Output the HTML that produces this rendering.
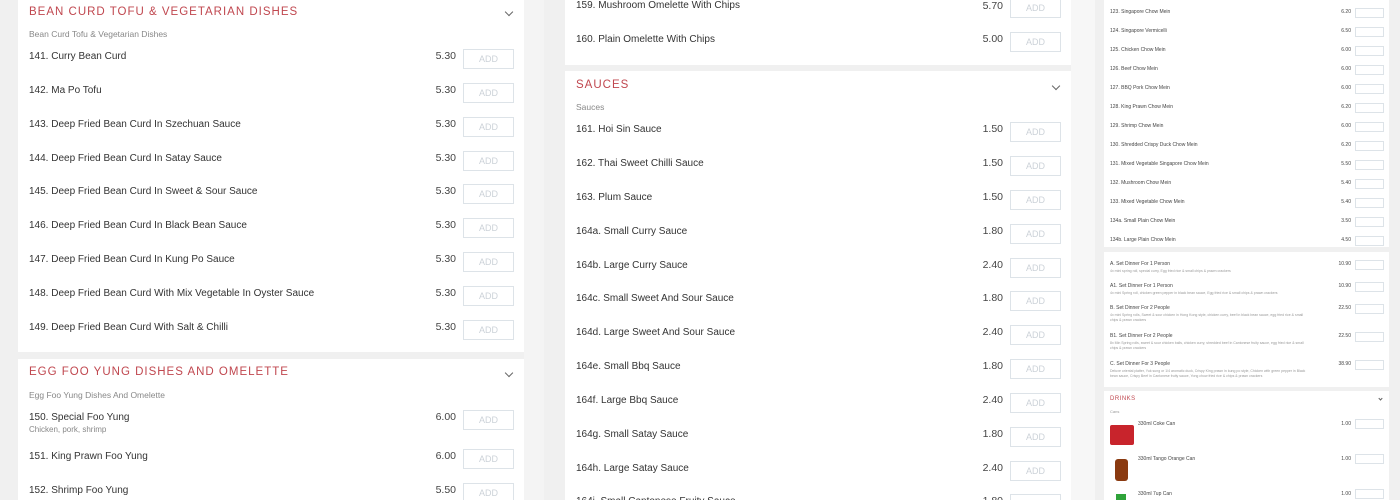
<!DOCTYPE html>
<html><head><meta charset="utf-8">
<style>
*{margin:0;padding:0;box-sizing:border-box}
html,body{width:1400px;height:500px;overflow:hidden}
body{background:#f0f0f0;font-family:"Liberation Sans",sans-serif;position:relative}
.card{position:absolute;background:#fff}
.a{position:absolute;white-space:nowrap}
.h{color:#c0474f;font-size:11.5px;letter-spacing:1px}
.s{color:#888;font-size:8.5px}
.n{color:#333;font-size:10px}
.p{color:#444;font-size:10.5px;text-align:right;width:50px}
.b{position:absolute;width:51px;height:20px;border:1px solid #dde3e8;color:#ccd2d8;font-size:9px;text-align:center;line-height:18px}
.chev{position:absolute;width:6px;height:6px;border-right:1px solid #666;border-bottom:1px solid #666;transform:rotate(45deg)}
.rn{color:#444;font-size:5px}
.rp{color:#444;font-size:5px;text-align:right;width:20px}
.rb{position:absolute;width:29px;height:10px;border:1px solid #dde3e8}
.rd{color:#999;font-size:3.5px}
</style></head><body>
<div style="position:absolute;left:1071px;top:0;width:24px;height:500px;background:#f7f7f7"></div>
<div style="position:absolute;left:524px;top:0;width:20px;height:500px;background:#f4f4f4"></div>

<!-- LEFT -->
<div class="card" style="left:18px;top:0;width:506px;height:352px"></div>
<div class="card" style="left:18px;top:359px;width:506px;height:141px"></div>
<div class="a h" style="left:29px;top:6px">BEAN CURD TOFU &amp; VEGETARIAN DISHES</div>
<div class="chev" style="left:506px;top:9px"></div>
<div class="a s" style="left:29px;top:29px">Bean Curd Tofu &amp; Vegetarian Dishes</div>

<div class="a n" style="left:29px;top:51px">141. Curry Bean Curd</div><div class="a p" style="left:406px;top:50px">5.30</div><div class="b" style="left:463px;top:49px">ADD</div>
<div class="a n" style="left:29px;top:85px">142. Ma Po Tofu</div><div class="a p" style="left:406px;top:84px">5.30</div><div class="b" style="left:463px;top:83px">ADD</div>
<div class="a n" style="left:29px;top:119px">143. Deep Fried Bean Curd In Szechuan Sauce</div><div class="a p" style="left:406px;top:118px">5.30</div><div class="b" style="left:463px;top:117px">ADD</div>
<div class="a n" style="left:29px;top:153px">144. Deep Fried Bean Curd In Satay Sauce</div><div class="a p" style="left:406px;top:152px">5.30</div><div class="b" style="left:463px;top:151px">ADD</div>
<div class="a n" style="left:29px;top:186px">145. Deep Fried Bean Curd In Sweet &amp; Sour Sauce</div><div class="a p" style="left:406px;top:185px">5.30</div><div class="b" style="left:463px;top:184px">ADD</div>
<div class="a n" style="left:29px;top:220px">146. Deep Fried Bean Curd In Black Bean Sauce</div><div class="a p" style="left:406px;top:219px">5.30</div><div class="b" style="left:463px;top:218px">ADD</div>
<div class="a n" style="left:29px;top:254px">147. Deep Fried Bean Curd In Kung Po Sauce</div><div class="a p" style="left:406px;top:253px">5.30</div><div class="b" style="left:463px;top:252px">ADD</div>
<div class="a n" style="left:29px;top:288px">148. Deep Fried Bean Curd With Mix Vegetable In Oyster Sauce</div><div class="a p" style="left:406px;top:287px">5.30</div><div class="b" style="left:463px;top:286px">ADD</div>
<div class="a n" style="left:29px;top:322px">149. Deep Fried Bean Curd With Salt &amp; Chilli</div><div class="a p" style="left:406px;top:321px">5.30</div><div class="b" style="left:463px;top:320px">ADD</div>

<div class="a h" style="left:29px;top:366px">EGG FOO YUNG DISHES AND OMELETTE</div>
<div class="chev" style="left:506px;top:370px"></div>
<div class="a s" style="left:29px;top:390px">Egg Foo Yung Dishes And Omelette</div>
<div class="a n" style="left:29px;top:412px">150. Special Foo Yung</div><div class="a s" style="left:29px;top:425px;font-size:8px">Chicken, pork, shrimp</div><div class="a p" style="left:406px;top:411px">6.00</div><div class="b" style="left:463px;top:410px">ADD</div>
<div class="a n" style="left:29px;top:451px">151. King Prawn Foo Yung</div><div class="a p" style="left:406px;top:450px">6.00</div><div class="b" style="left:463px;top:449px">ADD</div>
<div class="a n" style="left:29px;top:485px">152. Shrimp Foo Yung</div><div class="a p" style="left:406px;top:484px">5.50</div><div class="b" style="left:463px;top:483px">ADD</div>

<!-- MIDDLE -->
<div class="card" style="left:565px;top:0;width:506px;height:65px"></div>
<div class="card" style="left:565px;top:71px;width:506px;height:429px"></div>
<div class="a n" style="left:576px;top:0px">159. Mushroom Omelette With Chips</div><div class="a p" style="left:953px;top:0px">5.70</div><div class="b" style="left:1010px;top:-2px">ADD</div>
<div class="a n" style="left:576px;top:34px">160. Plain Omelette With Chips</div><div class="a p" style="left:953px;top:33px">5.00</div><div class="b" style="left:1010px;top:32px">ADD</div>
<div class="a h" style="left:576px;top:79px">SAUCES</div>
<div class="chev" style="left:1053px;top:83px"></div>
<div class="a s" style="left:576px;top:102px">Sauces</div>
<div class="a n" style="left:576px;top:124px">161. Hoi Sin Sauce</div><div class="a p" style="left:953px;top:123px">1.50</div><div class="b" style="left:1010px;top:122px">ADD</div>
<div class="a n" style="left:576px;top:158px">162. Thai Sweet Chilli Sauce</div><div class="a p" style="left:953px;top:157px">1.50</div><div class="b" style="left:1010px;top:156px">ADD</div>
<div class="a n" style="left:576px;top:192px">163. Plum Sauce</div><div class="a p" style="left:953px;top:191px">1.50</div><div class="b" style="left:1010px;top:190px">ADD</div>
<div class="a n" style="left:576px;top:226px">164a. Small Curry Sauce</div><div class="a p" style="left:953px;top:225px">1.80</div><div class="b" style="left:1010px;top:224px">ADD</div>
<div class="a n" style="left:576px;top:260px">164b. Large Curry Sauce</div><div class="a p" style="left:953px;top:259px">2.40</div><div class="b" style="left:1010px;top:258px">ADD</div>
<div class="a n" style="left:576px;top:293px">164c. Small Sweet And Sour Sauce</div><div class="a p" style="left:953px;top:292px">1.80</div><div class="b" style="left:1010px;top:291px">ADD</div>
<div class="a n" style="left:576px;top:327px">164d. Large Sweet And Sour Sauce</div><div class="a p" style="left:953px;top:326px">2.40</div><div class="b" style="left:1010px;top:325px">ADD</div>
<div class="a n" style="left:576px;top:361px">164e. Small Bbq Sauce</div><div class="a p" style="left:953px;top:360px">1.80</div><div class="b" style="left:1010px;top:359px">ADD</div>
<div class="a n" style="left:576px;top:395px">164f. Large Bbq Sauce</div><div class="a p" style="left:953px;top:394px">2.40</div><div class="b" style="left:1010px;top:393px">ADD</div>
<div class="a n" style="left:576px;top:429px">164g. Small Satay Sauce</div><div class="a p" style="left:953px;top:428px">1.80</div><div class="b" style="left:1010px;top:427px">ADD</div>
<div class="a n" style="left:576px;top:463px">164h. Large Satay Sauce</div><div class="a p" style="left:953px;top:462px">2.40</div><div class="b" style="left:1010px;top:461px">ADD</div>
<div class="a n" style="left:576px;top:496px">164i. Small Cantonese Fruity Sauce</div><div class="a p" style="left:953px;top:495px">1.80</div><div class="b" style="left:1010px;top:494px">ADD</div>

<!-- RIGHT -->
<div class="card" style="left:1104px;top:0;width:285px;height:247px"></div>
<div class="card" style="left:1104px;top:252px;width:285px;height:135px"></div>
<div class="card" style="left:1104px;top:391px;width:285px;height:109px"></div>

<div class="a rn" style="left:1110px;top:9px">123. Singapore Chow Mein</div><div class="a rp" style="left:1331px;top:9px">6.20</div><div class="rb" style="left:1355px;top:8px"></div>
<div class="a rn" style="left:1110px;top:28px">124. Singapore Vermicelli</div><div class="a rp" style="left:1331px;top:28px">6.50</div><div class="rb" style="left:1355px;top:27px"></div>
<div class="a rn" style="left:1110px;top:47px">125. Chicken Chow Mein</div><div class="a rp" style="left:1331px;top:47px">6.00</div><div class="rb" style="left:1355px;top:46px"></div>
<div class="a rn" style="left:1110px;top:66px">126. Beef Chow Mein</div><div class="a rp" style="left:1331px;top:66px">6.00</div><div class="rb" style="left:1355px;top:65px"></div>
<div class="a rn" style="left:1110px;top:85px">127. BBQ Pork Chow Mein</div><div class="a rp" style="left:1331px;top:85px">6.00</div><div class="rb" style="left:1355px;top:84px"></div>
<div class="a rn" style="left:1110px;top:104px">128. King Prawn Chow Mein</div><div class="a rp" style="left:1331px;top:104px">6.20</div><div class="rb" style="left:1355px;top:103px"></div>
<div class="a rn" style="left:1110px;top:123px">129. Shrimp Chow Mein</div><div class="a rp" style="left:1331px;top:123px">6.00</div><div class="rb" style="left:1355px;top:122px"></div>
<div class="a rn" style="left:1110px;top:142px">130. Shredded Crispy Duck Chow Mein</div><div class="a rp" style="left:1331px;top:142px">6.20</div><div class="rb" style="left:1355px;top:141px"></div>
<div class="a rn" style="left:1110px;top:161px">131. Mixed Vegetable Singapore Chow Mein</div><div class="a rp" style="left:1331px;top:161px">5.50</div><div class="rb" style="left:1355px;top:160px"></div>
<div class="a rn" style="left:1110px;top:180px">132. Mushroom Chow Mein</div><div class="a rp" style="left:1331px;top:180px">5.40</div><div class="rb" style="left:1355px;top:179px"></div>
<div class="a rn" style="left:1110px;top:199px">133. Mixed Vegetable Chow Mein</div><div class="a rp" style="left:1331px;top:199px">5.40</div><div class="rb" style="left:1355px;top:198px"></div>
<div class="a rn" style="left:1110px;top:218px">134a. Small Plain Chow Mein</div><div class="a rp" style="left:1331px;top:218px">3.50</div><div class="rb" style="left:1355px;top:217px"></div>
<div class="a rn" style="left:1110px;top:237px">134b. Large Plain Chow Mein</div><div class="a rp" style="left:1331px;top:237px">4.50</div><div class="rb" style="left:1355px;top:236px"></div>

<div class="a rn" style="left:1110px;top:261px">A. Set Dinner For 1 Person</div><div class="a rd" style="left:1110px;top:269px">4x mini spring roll, special curry, Egg fried rice &amp; small chips &amp; prawn crackers</div><div class="a rp" style="left:1331px;top:261px">10.90</div><div class="rb" style="left:1355px;top:260px"></div>
<div class="a rn" style="left:1110px;top:283px">A1. Set Dinner For 1 Person</div><div class="a rd" style="left:1110px;top:291px">4x mini Spring roll, chicken green pepper in black bean sauce, Egg fried rice &amp; small chips &amp; prawn crackers</div><div class="a rp" style="left:1331px;top:283px">10.90</div><div class="rb" style="left:1355px;top:282px"></div>
<div class="a rn" style="left:1110px;top:305px">B. Set Dinner For 2 People</div><div class="a rd" style="left:1110px;top:313px">4x mini Spring rolls, Sweet &amp; sour chicken in Hong Kong style, chicken curry, beef in black bean sauce, egg fried rice &amp; small</div><div class="a rd" style="left:1110px;top:318px">chips &amp; prawn crackers</div><div class="a rp" style="left:1331px;top:305px">22.50</div><div class="rb" style="left:1355px;top:304px"></div>
<div class="a rn" style="left:1110px;top:333px">B1. Set Dinner For 2 People</div><div class="a rd" style="left:1110px;top:341px">8x Min Spring rolls, sweet &amp; sour chicken balls, chicken curry, shredded beef in Cantonese fruity sauce, egg fried rice &amp; small</div><div class="a rd" style="left:1110px;top:346px">chips &amp; prawn crackers</div><div class="a rp" style="left:1331px;top:333px">22.50</div><div class="rb" style="left:1355px;top:332px"></div>
<div class="a rn" style="left:1110px;top:361px">C. Set Dinner For 3 People</div><div class="a rd" style="left:1110px;top:369px">Deluxe oriental platter, Yuk sung or 1/4 aromatic duck, Crispy King prawn in kung po style, Chicken with green pepper in Black</div><div class="a rd" style="left:1110px;top:374px">bean sauce, Crispy Beef in Cantonese fruity sauce, Yong chow fried rice &amp; chips &amp; prawn crackers</div><div class="a rp" style="left:1331px;top:361px">38.90</div><div class="rb" style="left:1355px;top:360px"></div>

<div class="a" style="left:1110px;top:396px;color:#c0474f;font-size:6px;letter-spacing:.5px">DRINKS</div>
<div class="chev" style="left:1379px;top:397px;width:3px;height:3px"></div>
<div class="a rd" style="left:1110px;top:409px;font-size:4px">Cans</div>
<div style="position:absolute;left:1110px;top:425px;width:24px;height:20px;background:#c8242c;border-radius:2px"></div>
<div class="a rn" style="left:1138px;top:421px">330ml Coke Can</div><div class="a rp" style="left:1331px;top:421px">1.00</div><div class="rb" style="left:1355px;top:419px"></div>
<div style="position:absolute;left:1115px;top:459px;width:13px;height:22px;background:#8a3a10;border-radius:3px"></div>
<div class="a rn" style="left:1138px;top:456px">330ml Tango Orange Can</div><div class="a rp" style="left:1331px;top:456px">1.00</div><div class="rb" style="left:1355px;top:454px"></div>
<div style="position:absolute;left:1116px;top:494px;width:10px;height:6px;background:#2fa33a"></div>
<div class="a rn" style="left:1138px;top:491px">330ml 7up Can</div><div class="a rp" style="left:1331px;top:491px">1.00</div><div class="rb" style="left:1355px;top:489px"></div>
</body></html>
